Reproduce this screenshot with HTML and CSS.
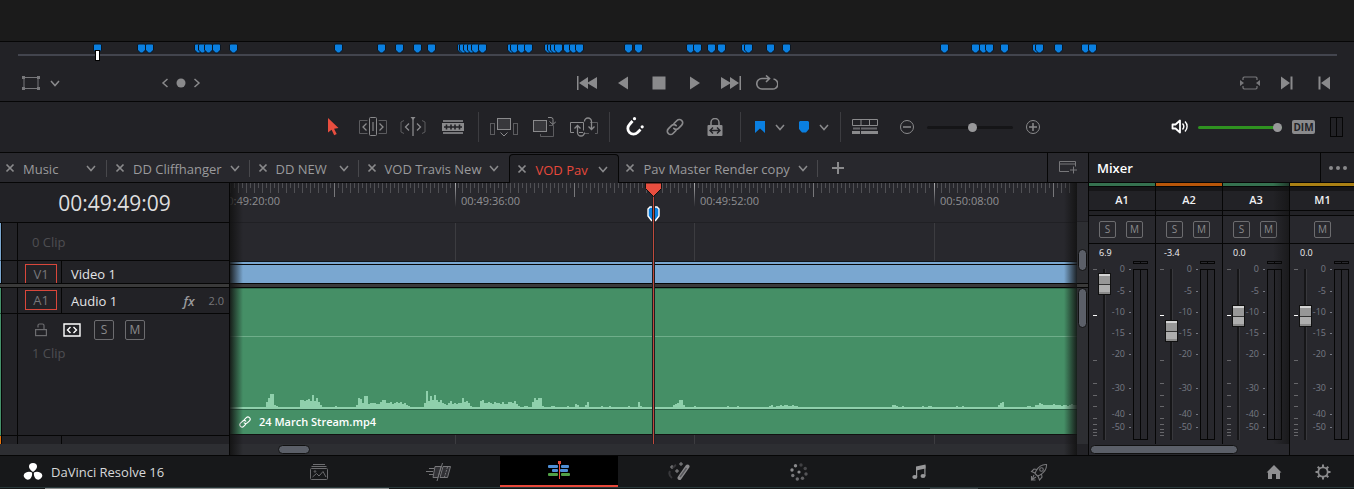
FILE: index.html
```html
<!DOCTYPE html>
<html lang="en">
<head>
<meta charset="utf-8">
<title>DaVinci Resolve 16</title>
<link rel="stylesheet" href="styles.css">
</head>
<body>
<svg class="sprite" aria-hidden="true">
  <symbol id="i-chev" viewBox="0 0 12 12"><path d="M2 4l4 4.500 4-4.500" fill="none" stroke="currentColor" stroke-width="1.500"/></symbol>
  <symbol id="i-x" viewBox="0 0 12 12"><path d="M2.500 2.500l7 7M9.500 2.500l-7 7" stroke="currentColor" stroke-width="1.700"/></symbol>
  <symbol id="i-link" viewBox="0 0 18 18"><g fill="none" stroke="currentColor" stroke-width="1.700" stroke-linecap="round"><path d="M8 5.500l3-3a3.300 3.300 0 0 1 4.700 4.700l-3.200 3.200a3.300 3.300 0 0 1-4.700 0"/><path d="M10 12.500l-3 3a3.300 3.300 0 0 1-4.700-4.700l3.200-3.200a3.300 3.300 0 0 1 4.700 0"/></g></symbol>
</svg>

<div class="viewer-edge"></div>

<section class="transport">
  <div class="scrub" id="scrub"><span class="scrub-head"></span></div>
  <div class="transport-row">
    <div class="group start">
      <button class="btn w24" aria-label="Transform"><svg width="18" height="14" viewBox="0 0 18 14"><path d="M2 1.500h14v11H2z" fill="none" stroke="#77777a"/><path d="M0 0h3v3H0zM15 0h3v3h-3zM0 11h3v3H0zM15 11h3v3h-3z" fill="#77777a"/></svg></button>
      <button class="btn w24" aria-label="Viewer mode"><svg width="12" height="12"><use href="#i-chev"/></svg></button>
      <div class="keyframes">
        <button class="btn w16" aria-label="Previous keyframe"><svg width="8" height="10" viewBox="0 0 8 10"><path d="M6.500 1L2 5l4.500 4" fill="none" stroke="currentColor" stroke-width="1.500"/></svg></button>
        <button class="btn w16" aria-label="Keyframe"><svg width="10" height="10"><circle cx="5" cy="5" r="4.500" fill="#8a8a8c"/></svg></button>
        <button class="btn w16" aria-label="Next keyframe"><svg width="8" height="10" viewBox="0 0 8 10"><path d="M1.500 1L6 5 1.500 9" fill="none" stroke="currentColor" stroke-width="1.500"/></svg></button>
      </div>
    </div>
    <div class="group">
      <button class="btn w36" aria-label="First frame"><svg width="22" height="14" viewBox="0 0 22 14" fill="currentColor"><path d="M1 0h1.500v14H1zM12 1v12L3 7zM21 1v12L11 7z"/></svg></button>
      <button class="btn w36" aria-label="Play reverse"><svg width="12" height="14" viewBox="0 0 12 14" fill="currentColor"><path d="M11 .5v13L1 7z"/></svg></button>
      <button class="btn w36" aria-label="Stop"><svg width="14" height="14"><path d="M.5.500h13v13H.5z" fill="currentColor"/></svg></button>
      <button class="btn w36" aria-label="Play"><svg width="12" height="14" viewBox="0 0 12 14" fill="currentColor"><path d="M1 .5v13L11 7z"/></svg></button>
      <button class="btn w36" aria-label="Last frame"><svg width="22" height="14" viewBox="0 0 22 14" fill="currentColor"><path d="M19.500 0H21v14h-1.500zM10 1v12l9-6zM1 1v12l10-6z"/></svg></button>
      <button class="btn w36" aria-label="Loop"><svg width="22" height="16" viewBox="0 0 22 16"><path d="M8 3.500H6A4.700 4.700 0 0 0 6 14h10a5 5 0 0 0 1.500-10M6 3.500h8M10 .5l3.500 3L10 7" fill="none" stroke="currentColor" stroke-width="1.600"/></svg></button>
    </div>
    <div class="group end">
      <button class="btn w37" aria-label="Match frame"><svg width="20" height="14" viewBox="0 0 20 14"><path d="M3 4V2l1-1h12l1 1v2M3 10v2l1 1h12l1-1v-2" fill="none" stroke="#77777a" stroke-width="1.200"/><path d="M0 4l4 3-4 3zM20 4l-4 3 4 3z" fill="#77777a"/></svg></button>
      <button class="btn w37" aria-label="Go to out"><svg width="12" height="14" fill="currentColor"><path d="M0 .5v13L9 7zM9.500.500h2v13h-2z"/></svg></button>
      <button class="btn w37" aria-label="Go to in"><svg width="12" height="14" fill="currentColor"><path d="M12 .5v13L3 7zM.5.500h2v13h-2z"/></svg></button>
    </div>
  </div>
</section>

<section class="toolbar">
  <div class="tools">
    <button class="btn w40 red" aria-label="Selection"><svg width="14" height="18" viewBox="0 0 14 18"><path d="M2 0v14.500l3.600-2.700 2.600 5.400 2.500-1.200-2.600-5.300 4.400-.6z" fill="currentColor"/></svg></button>
    <button class="btn w40" aria-label="Trim edit"><svg width="28" height="20" viewBox="0 0 28 20" fill="none" stroke="currentColor"><path d="M8.500 3.500h-8v13h8M19.500 3.500h8v13h-8" stroke="#5c5c5f"/><rect x="10.500" y=".5" width="7" height="18" rx="1"/><path d="M13 5h2v9h-2z" fill="#5c5c5f" stroke="none"/><path d="M7.500 6.500L4 10l3.500 3.500M20.500 6.500L24 10l-3.500 3.500" stroke-width="1.300"/></svg></button>
    <button class="btn w40" aria-label="Dynamic trim"><svg width="26" height="20" viewBox="0 0 26 20" fill="none" stroke="currentColor"><path d="M4 3.500L1 5v10l3 1.500M22 3.500L25 5v10l-3 1.500" stroke="#5c5c5f"/><path d="M13 2v17M9 6.500L5.500 10 9 13.500M17 6.500l3.500 3.500-3.500 3.500" stroke-width="1.300"/><path d="M10.500 0h5L13 3z" fill="currentColor" stroke="none"/></svg></button>
    <button class="btn w40" aria-label="Blade"><svg width="22" height="16" viewBox="0 0 22 16"><path d="M1 1h20v2H1zM1 13h20v2H1z" fill="#77777a"/><path d="M0 4h22v8H0z" fill="#8a8a8c"/><path d="M2 8h18M4.500 5.500v5M9 5.500v5M13 5.500v5M17.500 5.500v5" stroke="#222226" stroke-width="1.600"/></svg></button>
    <span class="sep"></span>
    <button class="btn w40" aria-label="Insert clip"><svg width="28" height="20" viewBox="0 0 28 20" fill="none" stroke="currentColor"><rect x="7.500" y="1.500" width="13" height="11" fill="#38383c"/><rect x=".5" y="6.500" width="4" height="11" stroke="#5c5c5f"/><rect x="23.500" y="6.500" width="4" height="11" stroke="#5c5c5f"/><path d="M10.500 15.500l3.500 3.500 3.500-3.500"/></svg></button>
    <button class="btn w40" aria-label="Overwrite clip"><svg width="24" height="22" viewBox="0 0 24 22" fill="none" stroke="currentColor"><rect x="1.500" y="4.500" width="13" height="11" fill="#38383c"/><path d="M17 9.500h4.500v11h-13V18" stroke="#5c5c5f"/><path d="M16 1.500h3q2 0 2 2v5M17.500 5.500l3.500 3 3-3"/></svg></button>
    <button class="btn w40" aria-label="Replace clip"><svg width="28" height="22" viewBox="0 0 28 22" fill="none" stroke="currentColor"><path d="M4 16.500H.5v-10h13v8M9 16.500h4" /><path d="M20 6.500h7.500v11H25M14 17.500h5" stroke="#5c5c5f"/><path d="M7.500 9.500v7a3.500 3.500 0 0 0 7 0M4.500 12.500l3-3 3 3M14.500 5.500a3.500 3.500 0 0 1 7 0v8M18.500 10.500l3 3 3-3" stroke-width="1.300"/></svg></button>
    <span class="sep"></span>
    <button class="btn w40 white" aria-label="Snapping"><svg width="20" height="20" viewBox="0 0 20 20"><path d="M7.500 4L4.500 7.500a5.600 5.600 0 0 0 8 8L15.500 12.500" fill="none" stroke="currentColor" stroke-width="2.800"/><circle cx="9.500" cy="1.700" r="1.600" fill="currentColor"/><circle cx="17.200" cy="9.800" r="1.600" fill="currentColor"/></svg></button>
    <button class="btn w40" aria-label="Linked selection"><svg width="18" height="18"><use href="#i-link"/></svg></button>
    <button class="btn w40" aria-label="Position lock"><svg width="16" height="18" viewBox="0 0 16 18"><path d="M4 7V4.500a4 4 0 0 1 8 0V7" fill="none" stroke="currentColor" stroke-width="1.500"/><rect x=".5" y="7" width="15" height="11" rx="1" fill="currentColor"/><path d="M3 12.500h10M6 9.500l-3 3 3 3M10 9.500l3 3-3 3" fill="none" stroke="#222226" stroke-width="1.400"/></svg></button>
    <span class="sep flags"></span>
    <button class="btn w24 blue" aria-label="Flag"><svg width="12" height="14"><path d="M1 1h10v12L6 8.500 1 13z" fill="currentColor"/></svg></button>
    <button class="btn w16" aria-label="Flag colours"><svg width="12" height="12"><use href="#i-chev"/></svg></button>
    <button class="btn w32 blue" aria-label="Marker"><svg width="12" height="14"><path d="M2 1h8l1 1v7l-3 3.500H4L1 9V2z" fill="currentColor"/></svg></button>
    <button class="btn w8" aria-label="Marker colours"><svg width="12" height="12"><use href="#i-chev"/></svg></button>
    <span class="sep wide"></span>
    <button class="btn w48" aria-label="Timeline view options"><svg width="26" height="16" viewBox="0 0 26 16" fill="none" stroke="currentColor"><path d="M.5.500h25v6H.5zM9 .5v6M17.500.500v6"/><path d="M1 9.500h24" stroke-width="2" stroke="#66666a"/><path d="M0 13.500h26" stroke-width="3"/><path d="M8.500 8v7" stroke="#222226"/></svg></button>
    <button class="btn w36" aria-label="Zoom out"><svg width="16" height="16" fill="none" stroke="currentColor"><circle cx="8" cy="8" r="6.500"/><path d="M4 8h8" stroke-width="1.500"/></svg></button>
    <input class="zoom" type="range" min="0" max="100" value="53" aria-label="Timeline zoom">
    <button class="btn w36" aria-label="Zoom in"><svg width="16" height="16" fill="none" stroke="currentColor"><circle cx="8" cy="8" r="6.500"/><path d="M4 8h8M8 4v8" stroke-width="1.500"/></svg></button>
  </div>
  <div class="volume">
    <button class="btn w24 white" aria-label="Mute"><svg width="18" height="16" viewBox="0 0 18 16" fill="none" stroke="currentColor"><path d="M1.500 5.500h3l4.500-4v12l-4.500-4h-3z" stroke-width="1.800" stroke-linejoin="round"/><path d="M11.500 4.500a4.500 4.500 0 0 1 0 6M14 2.500a7 7 0 0 1 0 10" stroke-width="1.400"/></svg></button>
    <input class="vol" type="range" min="0" max="100" value="100" aria-label="Volume">
    <button class="dim">DIM</button>
    <span class="mini-meter"></span>
  </div>
</section>

<main class="workspace">
  <section class="edit">
    <nav class="tabs" id="tabs">
      <div class="tab first"><button class="btn w12" aria-label="Close"><svg width="12" height="12"><use href="#i-x"/></svg></button><span class="tab-name">Music</span><button class="btn w12" aria-label="Menu"><svg width="12" height="12"><use href="#i-chev"/></svg></button></div>
      <div class="tab"><button class="btn w12" aria-label="Close"><svg width="12" height="12"><use href="#i-x"/></svg></button><span class="tab-name">DD Cliffhanger</span><button class="btn w12" aria-label="Menu"><svg width="12" height="12"><use href="#i-chev"/></svg></button></div>
      <div class="tab"><button class="btn w12" aria-label="Close"><svg width="12" height="12"><use href="#i-x"/></svg></button><span class="tab-name">DD NEW</span><button class="btn w12" aria-label="Menu"><svg width="12" height="12"><use href="#i-chev"/></svg></button></div>
      <div class="tab last-idle"><button class="btn w12" aria-label="Close"><svg width="12" height="12"><use href="#i-x"/></svg></button><span class="tab-name">VOD Travis New</span><button class="btn w12" aria-label="Menu"><svg width="12" height="12"><use href="#i-chev"/></svg></button></div>
      <div class="tab active"><button class="btn w12" aria-label="Close"><svg width="12" height="12"><use href="#i-x"/></svg></button><span class="tab-name">VOD Pav</span><button class="btn w12" aria-label="Menu"><svg width="12" height="12"><use href="#i-chev"/></svg></button></div>
      <div class="tab after"><button class="btn w12" aria-label="Close"><svg width="12" height="12"><use href="#i-x"/></svg></button><span class="tab-name">Pav Master Render copy</span><button class="btn w12" aria-label="Menu"><svg width="12" height="12"><use href="#i-chev"/></svg></button></div>
      <button class="btn w40" aria-label="New tab"><svg width="12" height="12"><path d="M6 0v12M0 6h12" stroke="currentColor" stroke-width="2"/></svg></button>
      <button class="btn add-timeline" aria-label="Add timeline"><svg width="18" height="13" viewBox="0 0 18 13" fill="none" stroke="#77777a"><path d="M10 10.500H.5V.5h16v5M.5 3h16M14.500 5.500v7M11 9h7"/></svg></button>
    </nav>

    <div class="timeline">
      <div class="heads">
        <div class="timecode">00:49:49:09</div>
        <div class="head-row clips v"><span class="gutter"></span><span class="muted">0 Clip</span></div>
        <div class="head-row video v"><span class="gutter"></span><span class="tag-cell"><span class="tag open">V1</span></span><span class="track-name">Video 1</span></div>
        <div class="divider"></div>
        <div class="head-row audio a"><span class="gutter"></span><span class="tag-cell"><span class="tag">A1</span></span><span class="track-name">Audio 1</span><span class="fx">fx</span><span class="format">2.0</span></div>
        <div class="head-row audio-body a"><span class="gutter"></span>
          <div class="audio-controls">
            <div class="control-row">
              <button class="btn w12" aria-label="Lock track"><svg width="12" height="14" viewBox="0 0 12 14" fill="none" stroke="#6c6c6f" stroke-width="1.200"><rect x=".6" y="6.600" width="10.800" height="6"/><path d="M3 4.500V2.500q0-1.500 1.500-1.500h3Q9 1 9 2.500v4"/></svg></button>
              <button class="btn w18 white" aria-label="Auto track selector"><svg width="18" height="14" viewBox="0 0 18 14" fill="none" stroke="currentColor" stroke-width="1.400"><path d="M1 1h16v12H1z"/><path d="M7.500 4L4.500 7l3 3M10.500 4l3 3-3 3"/></svg></button>
              <div class="sm-pair"><button class="sm big">S</button><button class="sm big">M</button></div>
            </div>
            <span class="muted">1 Clip</span>
          </div>
        </div>
        <div class="head-row next"><span class="gutter"></span><span class="tag-cell"></span></div>
        <div class="scroll-bed"></div>
      </div>

      <div class="canvas">
        <div class="ruler" id="ruler"></div>
        <div class="lane empty"></div>
        <div class="lane video-clip"></div>
        <div class="divider"></div>
        <div class="lane audio-clip">
          <div class="gain-line"></div>
          <div class="wave" id="wave"></div>
          <div class="clip-name"><svg width="12" height="12"><use href="#i-link"/></svg><span>24 March Stream.mp4</span></div>
        </div>
        <div class="lane tail"></div>
        <div class="scroll-bed"><span class="thumb-h"></span></div>
        <div class="playhead">
          <svg class="playhead-marker" width="13" height="16" viewBox="0 0 13 16"><path d="M3 1h7l2 2v7l-3.500 4.500h-4L1 10V3z" fill="#0a7fe0" stroke="#fff" stroke-width="1.400"/></svg>
          <span class="playhead-line"></span>
          <svg class="playhead-cap" width="17" height="14" viewBox="0 0 17 14"><path d="M.5 0h16v5.500L8.500 13.500.500 5.500z" fill="#e84e3f" stroke="#111"/></svg>
        </div>
      </div>

      <div class="scroll-col">
        <div class="scroll-top"></div>
        <div class="scroll-video"><span class="thumb-v"></span></div>
        <div class="divider"></div>
        <div class="scroll-audio"><span class="thumb-v long"></span></div>
        <div class="scroll-corner"></div>
      </div>
    </div>
  </section>

  <aside class="mixer">
    <header class="mixer-head"><h2 class="mixer-title">Mixer</h2><button class="btn dots" aria-label="Mixer options"><svg width="18" height="4" fill="currentColor"><circle cx="2" cy="2" r="2"/><circle cx="9" cy="2" r="2"/><circle cx="16" cy="2" r="2"/></svg></button></header>
    <div class="mixer-body">
      <div class="mixer-tracks">
        <div class="strips" id="strips"></div>
        <div class="mixer-scroll"><span class="mixer-thumb"></span></div>
      </div>
      <div class="master" id="master"></div>
    </div>
  </aside>
</main>

<footer class="pages">
  <div class="brand"><svg width="20" height="18" viewBox="0 0 20 18"><g fill="#fff"><path d="M10 9C7 7 6 5 6 3.500a4 3.500 0 0 1 8 0C14 5 13 7 10 9z"/><path d="M9 9.500c.5 3-.5 5-2 6.500A4 3.600 0 1 1 3 9.500c2-1 4-1 6 0z"/><path d="M11 9.500c-.5 3 .5 5 2 6.500a4 3.600 0 1 0 4-6.500c-2-1-4-1-6 0z"/></g></svg><span>DaVinci Resolve 16</span></div>
  <nav class="page-nav">
    <button class="page" aria-label="Media"><svg width="18" height="16" viewBox="0 0 18 16" fill="none" stroke="#6c6c6f"><path d="M3 .5h12M1.500 2.500h15"/><rect x=".5" y="4.500" width="17" height="11" rx="1"/><path d="M2.500 13l4-3.500 2.500 2.500 4-4.500 3 5.500"/><circle cx="5" cy="7.500" r=".8"/></svg></button>
    <button class="page" aria-label="Cut"><svg width="26" height="18" viewBox="0 0 26 18" fill="none" stroke="#77777a"><path d="M9 3.500h6L12 14.500H7zM17 3.500h7.500l-3 11h-7.500z" fill="#303034"/><path d="M16.500 0L11 18M3 5.500h5M0 8.500h7M3 11.500h4"/><path d="M21.500 4l-3 10" stroke-dasharray="2 1"/></svg></button>
    <button class="page current" aria-label="Edit"><svg width="24" height="20" viewBox="0 0 24 20"><g fill="#4f8fd6"><rect x="1" y="4" width="10" height="3" rx="1"/><rect x="14" y="4" width="8" height="3" rx="1"/><rect x="5" y="8" width="6" height="3" rx="1"/><rect x="13" y="8" width="8" height="3" rx="1"/></g><g fill="#51a147"><rect x="1" y="12" width="10" height="3" rx="1"/><rect x="14" y="12" width="9" height="3" rx="1"/></g><path d="M12.500 2v16" stroke="#e84e3f"/><path d="M11 0h3v3h-3z" fill="#e84e3f"/></svg></button>
    <button class="page" aria-label="Fusion"><svg width="22" height="20" viewBox="0 0 22 20"><path d="M19.500 4.500L11.500 16" stroke="#8a8a8c" stroke-width="4" stroke-linecap="round"/><path d="M18.500 6L12 15" stroke="#55555a" stroke-width="1.500"/><path d="M4 3v4M2 5h4M13 0v4M11 2h4M9 7v4M7 9h4" stroke="#8a8a8c"/><path d="M2 9q-2 4 2 7M8 3q-2 1-3 3" fill="none" stroke="#38383b" stroke-width="2"/></svg></button>
    <button class="page" aria-label="Color"><svg width="18" height="18" viewBox="0 0 18 18" fill="#8a8a8c"><circle cx="9" cy="9" r="1.600"/><circle cx="5.500" cy="2.800" r="1.700"/><circle cx="2" cy="7" r="1.700"/><circle cx="2.800" cy="12.500" r="1.700" fill="#77777a"/><circle cx="7.300" cy="16" r="1.700" fill="#6c6c6f"/><circle cx="12.500" cy="15.300" r="1.700" fill="#606063"/><circle cx="16" cy="11" r="1.700" fill="#555558"/><circle cx="15.200" cy="5.500" r="1.700" fill="#48484b"/><circle cx="11" cy="2" r="1.700" fill="#404043"/></svg></button>
    <button class="page" aria-label="Fairlight"><svg width="14" height="16" viewBox="0 0 14 16" fill="#98989a"><path d="M4 2.500L13.500.500v4L4 6.500z"/><path d="M4 3h1.200v10H4zM12.300 1.500h1.200V12h-1.200z"/><ellipse cx="2.800" cy="13" rx="2.500" ry="2"/><ellipse cx="11" cy="12" rx="2.500" ry="2"/></svg></button>
    <button class="page" aria-label="Deliver"><svg width="18" height="18" viewBox="0 0 18 18" fill="none" stroke="#77777a" stroke-width="1.100"><path d="M16.500 1.500Q10 1 6 8l-1 2.500 2.500 2.500L10 12q7-4 6.500-10.500zM7 6.500L4 6 1.500 8.500 5 10M11.500 11l.5 3-2.500 3-1.500-4M4 12l-2 4.500L6 14M1.500 13v4h4"/><circle cx="11.500" cy="6.500" r="1.800"/></svg></button>
  </nav>
  <div class="utility">
    <button class="btn w49" aria-label="Home"><svg width="16" height="14" viewBox="0 0 16 14"><path d="M8 0l7.500 7.500H14V14h-4V9H6v5H2V7.500H.5z" fill="#8f8f91"/></svg></button>
    <button class="btn w49" aria-label="Settings"><svg width="16" height="16" viewBox="0 0 16 16"><circle cx="8" cy="8" r="4.700" fill="none" stroke="#8a8a8c" stroke-width="1.800"/><path d="M8 .5v2.500M8 13v2.500M.5 8H3M13 8h2.500M2.700 2.700l1.800 1.800M11.500 11.500l1.800 1.800M13.300 2.700l-1.800 1.800M4.500 11.500l-1.800 1.800" stroke="#8a8a8c" stroke-width="2"/></svg></button>
  </div>
</footer>
<div class="desk-edge"></div>
<script src="app.js"></script>
</body>
</html>
```
FILE: styles.css
```css
* { box-sizing: border-box; }
body {
  margin: 0;
  min-height: 100vh;
  display: flex;
  flex-direction: column;
  background: #222226;
  color: #9a9a9c;
  font: 13px/18px "Open Sans", "Noto Sans", sans-serif;
  overflow: hidden;
}
button { font: inherit; color: inherit; background: none; border: 0; padding: 0; margin: 0; }
input { margin: 0; }
svg { display: block; flex: none; }
.sprite { position: absolute; width: 0; height: 0; }

.btn { display: flex; align-items: center; justify-content: center; flex: none; color: #8a8a8c; }
.w8 { width: 8px; }
.w12 { width: 12px; }
.w16 { width: 16px; }
.w18 { width: 18px; }
.w24 { width: 24px; }
.w32 { width: 32px; }
.w36 { width: 36px; }
.w37 { width: 37px; }
.w40 { width: 40px; }
.w48 { width: 48px; }
.w49 { width: 49px; }
.red { color: #e84e3f; }
.white { color: #fff; }
.blue { color: #0a7fe0; }

.viewer-edge { height: 42px; background: #1b1b1b; border-bottom: 1px solid #060606; }

/* Transport */
.transport { border-bottom: 1px solid #060606; height: 60px; }
.scrub { position: relative; height: 14px; margin: 0 17px 0 18px; border-bottom: 2px solid #43454e; }
.marker { position: absolute; top: 1px; width: 11px; height: 11px; margin-left: -5px; }
.scrub-head {
  position: absolute; left: 6%; top: 8px; z-index: 2;
  width: 5px; height: 11px; margin-left: -2px;
  background: #fff; border: 1px solid #000;
}
.transport-row { display: grid; grid-template-columns: 1fr auto 1fr; height: 28px; margin-top: 13px; padding: 0 12px; }
.transport-row .group { display: flex; }
.transport-row .start { padding-left: 7px; }
.transport-row .end { justify-content: flex-end; }
.keyframes { display: flex; margin-left: 90px; }

/* Toolbar */
.toolbar { display: flex; align-items: center; height: 51px; border-bottom: 1px solid #060606; padding: 0 11px 0 313px; }
.tools { display: flex; align-items: center; }
.sep { width: 1px; height: 30px; margin: 0 5px; background: #3c3c40; }
.sep.flags { margin-right: 7px; }
.sep.wide { margin: 0 0 0 12px; }
.volume { display: flex; align-items: center; margin-left: auto; }
input[type="range"] { appearance: none; background: transparent; }
.zoom { width: 86px; height: 16px; margin: 0 2px; }
.zoom::-webkit-slider-runnable-track { height: 3px; background: #151517; border-radius: 2px; }
.zoom::-webkit-slider-thumb { appearance: none; width: 9px; height: 9px; margin-top: -3px; border-radius: 50%; background: #98989a; }
.vol { width: 84px; height: 16px; margin: 0 10px 0 6px; }
.vol::-webkit-slider-runnable-track { height: 3px; background: #2f9220; border-radius: 2px; }
.vol::-webkit-slider-thumb { appearance: none; width: 9px; height: 9px; margin-top: -3px; border-radius: 50%; background: #98989a; }
.dim { width: 23px; height: 14px; border-radius: 2px; background: #8a8a8c; color: #222226; font-size: 10px; line-height: 14px; font-weight: 700; }
.mini-meter { width: 13px; height: 20px; margin-left: 15px; border: 1px solid #060606; background: linear-gradient(#060606, #060606) center / 1px 100% no-repeat; }

/* Workspace */
.workspace { flex: 1; display: flex; min-height: 302px; }
.edit { flex: 1; min-width: 0; display: flex; flex-direction: column; }
.tabs { display: flex; height: 30px; background: #28282d; border-bottom: 1px solid #060606; }
.tab { position: relative; display: flex; align-items: center; gap: 7px; padding: 0 8px 0 7px; border-right: 1px solid transparent; flex: none; }
.tab::after { content: ""; position: absolute; right: -1px; top: 7px; width: 1px; height: 17px; background: #48484c; }
.tab.first { padding: 0 9px 0 4px; }
.tab-name { min-width: 55px; padding-top: 2px; white-space: nowrap; }
.tab.active { background: #222226; border: 1px solid #060606; border-bottom: 0; border-radius: 4px 4px 0 0; margin-top: 1px; margin-bottom: -1px; padding: 0 9px 0 6px; }
.tab.active .tab-name { color: #e8493b; }
.tab.active::after, .tab.last-idle::after { display: none; }
.tab.after { padding-left: 5px; }
.tab .btn { height: 24px; }
.add-timeline { width: 41px; margin-left: auto; border-left: 1px solid #060606; }

.timeline { flex: 1; display: grid; grid-template-columns: 230px minmax(0, 1fr) 11px; }
.heads, .canvas, .scroll-col { display: flex; flex-direction: column; }
.heads { border-right: 1px solid #060606; }
.timecode { height: 40px; border-bottom: 1px solid #060606; font-size: 21px; line-height: 40px; text-align: center; color: #dededf; }
.head-row { display: flex; align-items: center; border-left: 1px solid transparent; }
.head-row.v { border-left-color: #7aa7d0; }
.head-row.a { border-left-color: #45916a; }
.gutter { align-self: stretch; flex: none; width: 17px; border: solid #060606; border-width: 0 1px; }
.muted { color: #4e4e52; }
.clips { height: 38px; border-bottom: 1px solid #060606; }
.clips .muted { padding-left: 14px; }
.video { height: 22px; }
.video .track-name { padding-top: 4px; }
.audio { height: 26px; border-bottom: 1px solid #060606; }
.tag-cell { align-self: stretch; flex: none; width: 44px; padding: 2px 4px 2px 7px; border-right: 1px solid #060606; }
.tag { display: block; height: 20px; border: 1px solid #d9473b; color: #77777a; text-align: center; line-height: 18px; }
.tag.open { border-bottom: 0; margin-top: 1px; height: 19px; }
.track-name { padding-left: 9px; color: #e4e4e6; }
.fx { margin-left: auto; font-style: italic; font-weight: 600; }
.format { padding: 0 5px 0 14px; font-size: 11px; color: #77777a; }
.divider { flex: none; height: 5px; background: #3a3a3a; border: solid #060606; border-width: 1px 0; }
.audio-body { flex: 1; min-height: 100px; align-items: stretch; border-bottom: 1px solid #060606; }
.audio-controls { padding: 6px 0 0 17px; }
.control-row { display: flex; align-items: center; }
.control-row .white { margin: 0 13px 0 16px; }
.sm-pair { display: flex; gap: 11px; }
.audio-controls .muted { display: block; margin: 4px 0 0 -3px; }
.sm { width: 17px; height: 17px; border: 1px solid #6c6c6f; border-radius: 2px; font-size: 10px; line-height: 15px; color: #8a8a8c; }
.sm.big { width: 20px; height: 20px; font-size: 12px; line-height: 18px; }
.next { height: 8px; border-left-color: #e8730c; }
.scroll-bed { height: 11px; background: #2d2e32; padding: 1px 48px; }
.thumb-h { display: block; width: 32px; height: 9px; border-radius: 5px; background: #5b5f68; border: 1px solid #111; }

.canvas { position: relative; background: #28282d; overflow: hidden; }
.canvas::before, .canvas::after { content: ""; position: absolute; top: 0; bottom: 0; width: 13px; z-index: 2; pointer-events: none; }
.canvas::before { left: 0; background: linear-gradient(90deg, rgba(18,18,18,.9), transparent); }
.canvas::after { right: 0; background: linear-gradient(270deg, rgba(18,18,18,.9), transparent); }
.ruler { height: 40px; border-bottom: 1px solid #202024; overflow: hidden; }
.ruler text { font-size: 11px; fill: #8f8f92; }
.lane { flex: none; }
.empty, .tail { background-image: linear-gradient(#3c3c40, #3c3c40), linear-gradient(#3c3c40, #3c3c40), linear-gradient(#3c3c40, #3c3c40); background-size: 1px 100%; background-repeat: no-repeat; background-position: 225px 0, 464px 0, 704px 0; }
.empty { height: 38px; }
.video-clip { height: 22px; background: linear-gradient(#101418 1px, #7aa7d0 1px 3px, #060606 3px 4px, #7aa7d0 4px); }
.lane.audio-clip { flex: 1; display: flex; flex-direction: column; background: #458f66; border-bottom: 1px solid #111; }
.gain-line { height: 49px; border-top: 1px solid #33704f; border-bottom: 1px solid #6fae8a; }
.wave { flex: 1; display: flex; align-items: flex-end; border-bottom: 2px solid #8fd0ac; }
.clip-name { display: flex; align-items: center; gap: 8px; height: 25px; padding-left: 9px; border-top: 1px solid #2c6347; color: #fff; font-size: 11px; font-weight: 600; }
.tail { height: 9px; }
.playhead { position: absolute; z-index: 1; left: 422px; top: 0; bottom: 11px; width: 3px; }
.playhead-line { position: absolute; top: 0; bottom: 0; left: 0; right: 0; background: linear-gradient(90deg, #1c2024 1px, #c04a3c 1px 2px, #1c2024 2px); }
.playhead-cap { position: absolute; left: -7px; top: 0; }
.playhead-marker { position: absolute; left: -5px; top: 23px; }

.scroll-top { height: 39px; background: #28282d; border-bottom: 1px solid #202024; }
.scroll-video { height: 61px; background: #2d2e32; padding: 27px 1px 0; }
.scroll-audio { flex: 1; background: #2d2e32; padding: 0 1px; }
.scroll-corner { height: 11px; background: #222226; }
.thumb-v { display: block; height: 22px; border: 1px solid #111; border-radius: 5px; background: #5b5f68; }
.thumb-v.long { height: 40px; }

/* Mixer */
.mixer { width: 266px; border-left: 1px solid #060606; display: flex; flex-direction: column; background: #28282d; }
.mixer-head { display: flex; height: 30px; background: #222226; border-bottom: 1px solid #060606; }
.mixer-title { flex: 1; margin: 0; padding: 6px 8px; font-size: 13px; line-height: 18px; font-weight: 600; color: #fff; }
.dots { width: 34px; border-left: 1px solid #060606; }
.mixer-body { flex: 1; display: flex; }
.mixer-tracks { position: relative; width: 201px; display: flex; flex-direction: column; border-right: 1px solid #060606; }
.mixer-tracks::after { content: ""; position: absolute; right: 0; top: 0; bottom: 11px; width: 16px; background: linear-gradient(270deg, rgba(15,15,15,.55), transparent); pointer-events: none; }
.strips { flex: 1; display: flex; }
.strip { width: 67px; border-right: 1px solid #060606; }
.strips .strip:last-child { width: 66px; border-right: 0; }
.master .strip { width: 65px; border-right: 0; }
.strip-color { height: 4px; border-bottom: 1px solid #060606; }
.strip-color.green { background: #35714f; }
.strip-color.orange { background: #b95609; }
.strip-color.gold { background: #ab8114; }
.strip-name { height: 24px; border-top: 4px solid #161618; border-bottom: 1px solid #060606; background: #222226; text-align: center; font-size: 11px; line-height: 17px; font-weight: 600; color: #f0f0f2; }
.strip-gap { height: 5px; border-bottom: 1px solid #060606; background: #222226; }
.strip-buttons { display: flex; justify-content: center; gap: 10px; height: 28px; padding: 5px 2px 0 0; border-bottom: 1px solid #060606; }
.master .strip-buttons { padding-right: 0; }
.strip-value { height: 17px; padding-left: 10px; font-size: 9px; line-height: 18px; color: #f0f0f2; }
.strip-value.neg { padding-left: 8px; }
.fader-area { display: flex; align-items: flex-start; padding-left: 4px; }
.fader { writing-mode: vertical-lr; direction: rtl; width: 14px; height: 171px; margin-top: 8px; }
.fader::-webkit-slider-runnable-track { width: 3px; background: linear-gradient(90deg, #161618 2px, #38383c 2px); }
.fader::-webkit-slider-thumb { appearance: none; width: 13px; height: 22px; margin-left: -5px; border: 1px solid #111; background: linear-gradient(#d4d4d4 2px, #979797 2px 10px, #333 10px 11px, #aeaeae 11px 18px, #8a8a8a 18px); }
.scale text { font-size: 9px; fill: #777a84; text-anchor: end; }
.meter { width: 15px; display: flex; flex-direction: column; gap: 5px; }
.meter-clip, .meter-level { border: 1px solid #060606; background: linear-gradient(#060606, #060606) center / 1px 100% no-repeat; }
.meter-clip { height: 3px; }
.meter-level { height: 171px; }
.mixer-scroll { height: 11px; padding: 1px; }
.mixer-thumb { display: block; width: 148px; height: 9px; border: 1px solid #111; border-radius: 5px; background: #5b5f68; }

/* Page navigation */
.pages { display: grid; grid-template-columns: 260px auto 1fr; height: 32px; background: #17181a; border-top: 1px solid #060606; }
.brand { display: flex; align-items: center; gap: 8px; padding-left: 23px; color: #d8d8da; }
.page-nav { display: flex; gap: 2px; }
.page { width: 118px; display: flex; align-items: center; justify-content: center; }
.page.current { background: #000; border-bottom: 2px solid #e8483a; }
.utility { display: flex; justify-content: flex-end; padding-right: 7px; }
.desk-edge { height: 2px; border-top: 1px solid #28383a; background: linear-gradient(90deg, #161616 45px, #8c8c8c 45px 389px, #161616 389px 930px, #3c3e40 930px 978px, #161616 978px); }
```
FILE: app.js
```js
// Viewer markers, in pixels along a 1319px wide scrub bar.
const markers = [79, 123, 131, 180, 184, 190, 198, 215, 320, 363, 381, 399, 413, 443, 445, 449, 453, 457, 464,
  493, 496, 503, 510, 530, 533, 536, 540, 549, 555, 561, 610, 620, 672, 679, 693, 703, 727, 730, 752, 768,
  926, 957, 965, 971, 986, 1018, 1021, 1040, 1067, 1074];
const scrub = document.getElementById('scrub');
markers.forEach(m => scrub.insertAdjacentHTML('beforeend',
  `<svg class="marker" style="left:${(m / 1319 * 100).toFixed(2)}%" viewBox="0 0 11 11"><path d="M2.500 1h6l1 1v5l-3 3h-2l-3-3V2z" fill="#0a7fe0" stroke="#0b1622"/></svg>`));

// Ruler: 60 ticks between two labelled positions.
const labels = { '-15': '00:49:20:00', 225: '00:49:36:00', 464: '00:49:52:00', 704: '00:50:08:00' };
let ticks = '';
for (let i = 0; i < 215; i++) {
  const x = Math.floor(-15 + i * 3.992);
  const k = i % 60;
  if (k === 0) continue;
  const h = k === 30 ? 14 : k % 2 ? 5 : 10;
  ticks += `<rect x="${x}" width="1" height="${h}" fill="${k === 30 ? '#77777a' : '#505054'}"/>`;
}
for (const [x, t] of Object.entries(labels)) {
  ticks += `<rect x="${x}" width="1" height="24" fill="url(#fade)"/><text x="${+x + 6}" y="22">${t}</text>`;
}
document.getElementById('ruler').innerHTML =
  `<svg width="1600" height="39"><defs><linearGradient id="fade" x2="0" y2="1"><stop stop-color="#b0b0b2"/><stop offset="1" stop-color="#b0b0b2" stop-opacity="0"/></linearGradient></defs>${ticks}</svg>`;

// Waveform peaks: start position and heights of successive 2px bars.
const peaks = [
  [36, [5, 9, 13, 13, 2, 1]], [70, [7, 7, 6, 7, 8, 6, 12, 6, 9, 5, 2]], [105, [1]],
  [126, [2, 9, 8, 4, 11, 11, 3, 4, 4, 4, 3, 3, 5, 7, 7, 4, 4, 5, 3, 4, 5, 4, 5, 3, 4, 2, 1]],
  [194, [4, 16, 6, 11, 7, 12, 7, 5, 7, 4, 3, 2, 4, 6, 3, 4, 3, 4, 4, 9, 5, 6, 4, 1]],
  [250, [6, 7, 4, 4, 5, 4, 3, 5, 4, 4, 3, 5, 3, 3, 5, 5, 4, 6, 3, 1]], [294, [1, 1]],
  [302, [5, 9, 7, 9, 9, 1]], [321, [1, 1]], [337, [1]], [345, [3, 2]], [355, [2, 5]], [371, [1]], [379, [1]],
  [398, [1]], [408, [5, 1]], [443, [2, 3, 4, 7, 7, 2]], [464, [1]], [497, [1]], [507, [1]], [539, [1, 2]],
  [546, [1, 1, 2, 1, 2, 2, 1, 1, 2, 1, 1]], [662, [2, 2, 1]], [672, [1]], [692, [1]], [698, [1, 1]], [726, [1]],
  [732, [1]], [768, [2, 4, 5]], [797, [1, 1]],
  [805, [2, 2, 4, 3, 2, 2, 2, 2, 2, 3, 2, 2, 2, 1, 2, 2, 1, 2, 3, 2, 2, 2, 1, 2, 2]]
];
document.getElementById('wave').innerHTML = '<svg width="100%" height="20" fill="#8fd0ac" shape-rendering="crispEdges">' +
  peaks.map(([x, hs]) => hs.map((h, i) => `<rect x="${x + i * 2}" y="${20 - h}" width="2" height="${h}"/>`).join('')).join('') + '</svg>';

// Mixer strips.
const scale = [[0, 8], [-5, 30], [-10, 51], [-15, 72], [-20, 93], [-30, 127], [-40, 153], [-50, 166]];
const ticksLeft = [8, 99, 122, 134, 145, 157, 163, 168, 171, 174];
const strip = (name, color, value, pos, solo) => `
  <div class="strip">
    <div class="strip-color ${color}"></div>
    <div class="strip-name">${name}</div>
    <div class="strip-gap"></div>
    <div class="strip-buttons">${solo ? '<button class="sm">S</button>' : ''}<button class="sm">M</button></div>
    <div class="strip-value${value < 0 ? ' neg' : ''}">${value}</div>
    <div class="fader-area">
      <svg width="4" height="179">${ticksLeft.map(y => `<rect y="${y}" width="4" height="1" fill="#66666a"/>`).join('')}<rect y="54" width="4" height="1" fill="#fff"/></svg>
      <input class="fader" type="range" min="0" max="100" step="any" value="${pos}" aria-label="${name} level">
      <svg class="scale" width="22" height="179" overflow="visible">${scale.map(([n, y]) => `<text x="14" y="${y + 3}">${n}</text><rect x="18" y="${y}" width="2" height="1" fill="#777a84"/>`).join('')}</svg>
      <div class="meter"><div class="meter-clip"></div><div class="meter-level"></div></div>
    </div>
  </div>`;
document.getElementById('strips').innerHTML =
  strip('A1', 'green', '6.9', 97, true) + strip('A2', 'orange', '-3.4', 65.5, true) + strip('A3', 'green', '0.0', 76, true);
document.getElementById('master').innerHTML = strip('M1', 'gold', '0.0', 76, false);
```
